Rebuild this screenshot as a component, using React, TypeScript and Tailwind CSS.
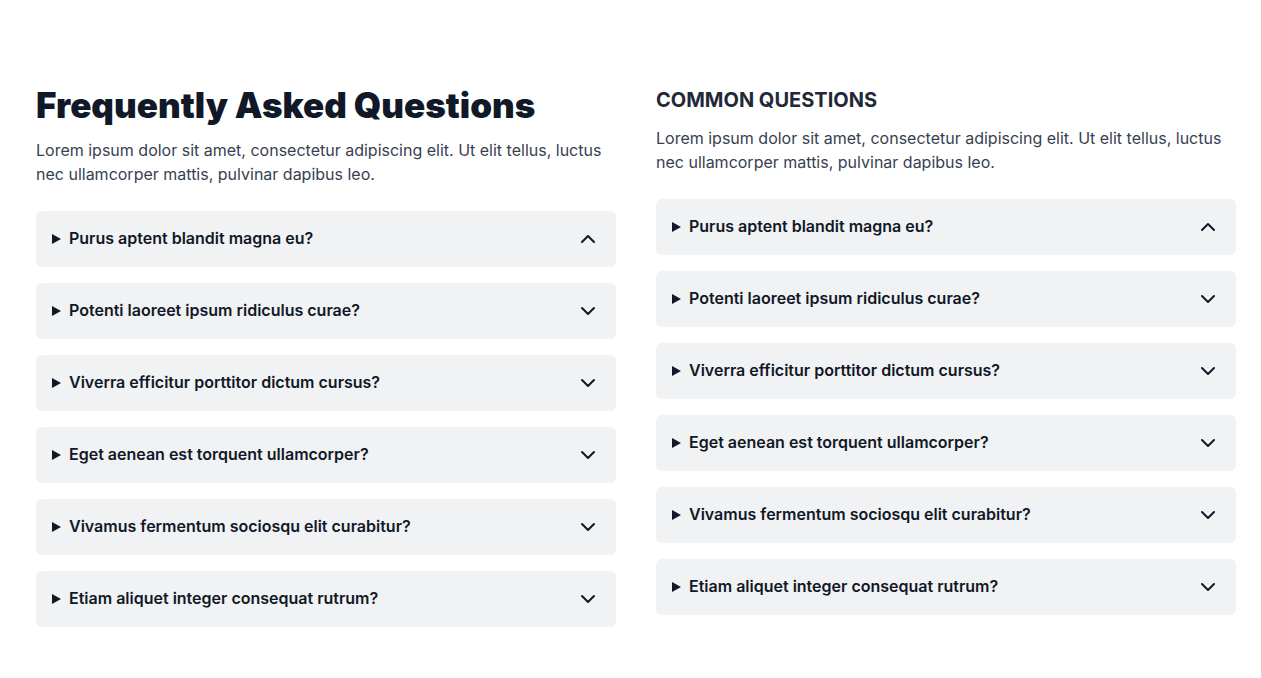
import { ChevronDown, ChevronUp } from "lucide-react";

const questions = [
  "Purus aptent blandit magna eu?",
  "Potenti laoreet ipsum ridiculus curae?",
  "Viverra efficitur porttitor dictum cursus?",
  "Eget aenean est torquent ullamcorper?",
  "Vivamus fermentum sociosqu elit curabitur?",
  "Etiam aliquet integer consequat rutrum?",
];

const lead =
  "Lorem ipsum dolor sit amet, consectetur adipiscing elit. Ut elit tellus, luctus nec ullamcorper mattis, pulvinar dapibus leo.";

function QuestionList() {
  return (
    <div className="mt-[25px] flex flex-col gap-4">
      {questions.map((question, index) => (
        <button
          key={question}
          type="button"
          className="flex h-14 w-full items-center rounded-md bg-[#f1f2f4] px-4 text-left text-base font-semibold text-[#111827]"
        >
          <svg className="mr-2 h-[10px] w-[9px] shrink-0" viewBox="0 0 9 10" fill="currentColor" aria-hidden="true">
            <path d="M0 0L9 5L0 10Z" />
          </svg>
          <span className="flex-1 pb-0.5">{question}</span>
          {index === 0 ? (
            <ChevronUp className="size-6" strokeWidth={2} />
          ) : (
            <ChevronDown className="size-6" strokeWidth={2} />
          )}
        </button>
      ))}
    </div>
  );
}

export default function App() {
  return (
    <main className="grid grid-cols-2 gap-10 bg-white pt-[88px] pr-[25px] pb-12 pl-9 font-['Inter',sans-serif]">
      <section>
        <h1 className="text-[35px] leading-[34px] font-black text-[#111827]">Frequently Asked Questions</h1>
        <p className="mt-4 text-base text-[#374151]">{lead}</p>
        <QuestionList />
      </section>
      <section>
        <h2 className="text-xl leading-6 font-bold text-[#1f2937] uppercase">Common Questions</h2>
        <p className="mt-[14px] text-base text-[#374151]">{lead}</p>
        <QuestionList />
      </section>
    </main>
  );
}
